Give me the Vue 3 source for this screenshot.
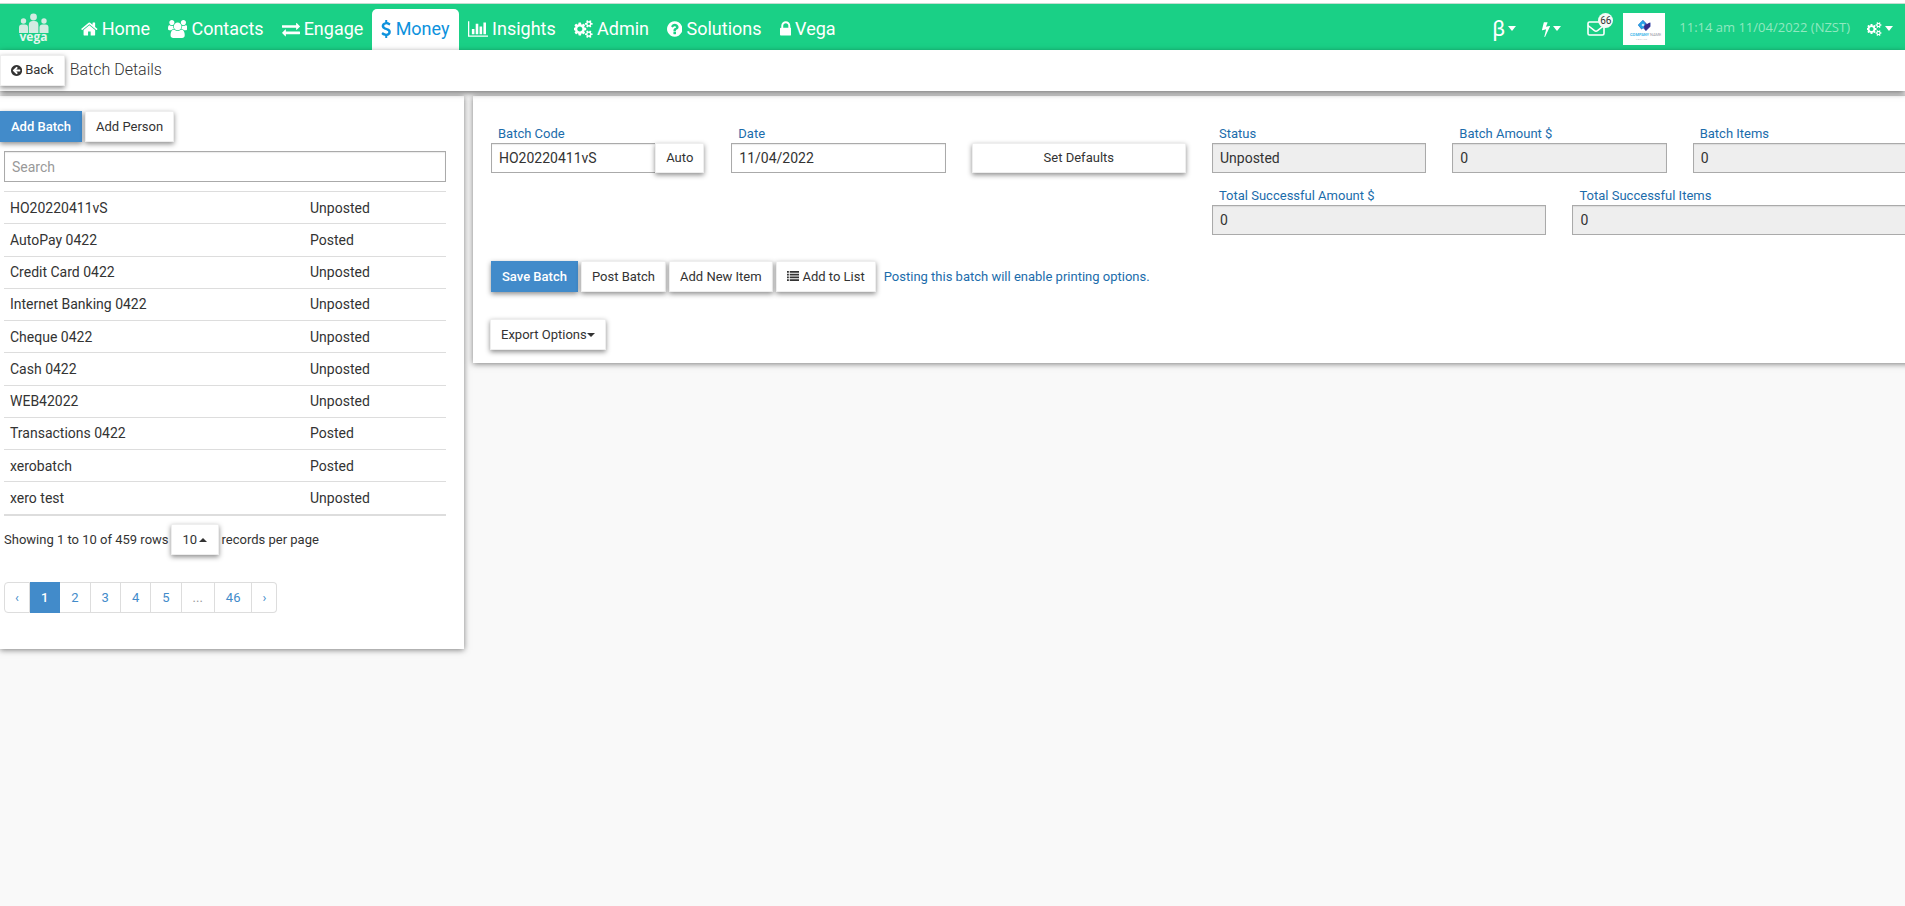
<template>
  <div class="page">
    <header class="topbar">
      <a href="#" class="brand" aria-label="Vega">
        <svg viewBox="0 0 30 32" class="brand-logo">
          <g fill="#d3ebe2">
            <circle cx="4.500" cy="8" r="2.700" />
            <circle cx="14.500" cy="4" r="3.400" />
            <circle cx="25" cy="8" r="2.700" />
            <path d="M0 20v-5.500q0-3 3-3h3q3 0 3 3v5.500z" />
            <path d="M9.800 20v-8q0-4 4-4h1.600q4 0 4 4v8z" />
            <path d="M20.500 20v-5.500q0-3 3-3h3q3 0 3 3v5.500z" />
          </g>
          <text x="14.500" y="28" text-anchor="middle">vega</text>
        </svg>
      </a>

      <nav class="nav">
        <a
          v-for="item in navItems"
          :key="item.label"
          href="#"
          class="nav-link"
          :class="{ active: item.label === activeNav }"
          @click.prevent="activeNav = item.label"
        >
          <svg class="fa" :class="'fa-' + item.icon" :viewBox="icons[item.icon].box"><path :d="icons[item.icon].d" /></svg>
          <span>{{ item.label }}</span>
        </a>
      </nav>

      <div class="tools">
        <button type="button" class="tool" aria-label="Beta features"><span class="beta">β</span><i class="caret"></i></button>
        <button type="button" class="tool" aria-label="Quick actions">
          <svg class="fa fa-bolt" :viewBox="icons.bolt.box"><path :d="icons.bolt.d" /></svg><i class="caret"></i>
        </button>
        <button type="button" class="tool mail" aria-label="Messages">
          <svg viewBox="0 0 18 15" class="mail-icon">
            <rect x="1" y="1" width="16" height="13" rx="1.500" fill="none" stroke="#fff" stroke-width="1.600" />
            <path d="M1 4.500l6.500 5.200q1.500 1 3 0l6.500-5.200" fill="none" stroke="#fff" stroke-width="1.600" />
          </svg>
          <span class="badge">66</span>
        </button>
        <a href="#" class="company" aria-label="Company">
          <svg viewBox="0 0 42 32">
            <path d="M15 12l5-5 4 4 3.500-1.500v4l-4.500 4.500-3-3-1.500 1.500z" fill="#3f4fae" />
            <path d="M15 12l4.500-4.800 3 2.800-2 5-2 1z" fill="#29a3e6" />
            <path d="M21 13l6-3.500v4l-4.500 4z" fill="#3a2a86" />
            <circle cx="20" cy="12" r="1.300" fill="#c8e6fa" />
            <text x="7" y="23" font-size="4" font-weight="700" fill="#45b8ea">COMPANY</text>
            <text x="27" y="23" font-size="4" fill="#9a9aa5">NAME</text>
            <text x="13" y="27" font-size="2" fill="#b5b5bd">T A G L I N E</text>
          </svg>
        </a>
        <span class="clock">11:14 am 11/04/2022 (NZST)</span>
        <button type="button" class="tool" aria-label="Settings">
          <svg class="fa fa-small" :viewBox="icons.cogs.box"><path :d="icons.cogs.d" /></svg><i class="caret"></i>
        </button>
      </div>
    </header>

    <div class="titlebar">
      <button type="button" class="btn">
        <svg class="fa" :viewBox="icons.back.box"><path :d="icons.back.d" /></svg>
        Back
      </button>
      <h1>Batch Details</h1>
    </div>

    <main class="columns">
      <section class="panel list-panel">
        <div class="btn-row">
          <button type="button" class="btn btn-primary">Add Batch</button>
          <button type="button" class="btn">Add Person</button>
        </div>

        <div class="list-body">
          <input v-model="search" type="text" class="field" placeholder="Search" aria-label="Search" />

          <table class="batches">
            <tbody>
              <tr v-for="batch in visibleBatches" :key="batch.code">
                <td class="code">{{ batch.code }}</td>
                <td>{{ batch.status }}</td>
              </tr>
            </tbody>
          </table>

          <div class="page-info">
            <span>Showing 1 to 10 of 459 rows</span>
            <label class="page-size">
              <span class="select-wrap">
                <select v-model="pageSize" class="btn">
                  <option>10</option>
                  <option>25</option>
                  <option>50</option>
                  <option>100</option>
                </select>
                <i class="caret up"></i>
              </span>
              records per page
            </label>
          </div>

          <ul class="pagination">
            <li v-for="p in pages" :key="p">
              <span v-if="p === '...'" class="gap">...</span>
              <a v-else href="#" :class="{ active: p === currentPage }" @click.prevent="goTo(p)">{{ p }}</a>
            </li>
          </ul>
        </div>
      </section>

      <section class="panel detail-panel">
        <form class="detail-grid" @submit.prevent>
          <div class="cell">
            <label for="code">Batch Code</label>
            <div class="input-group">
              <input id="code" v-model="form.code" type="text" class="field" />
              <button type="button" class="btn">Auto</button>
            </div>
          </div>
          <div class="cell">
            <label for="date">Date</label>
            <input id="date" v-model="form.date" type="text" class="field" />
          </div>
          <div class="cell cell-end">
            <button type="button" class="btn btn-block">Set Defaults</button>
          </div>
          <div class="cell">
            <label for="status">Status</label>
            <input id="status" type="text" class="field" value="Unposted" readonly />
          </div>
          <div class="cell">
            <label for="amount">Batch Amount $</label>
            <input id="amount" type="text" class="field" value="0" readonly />
          </div>
          <div class="cell">
            <label for="items">Batch Items</label>
            <input id="items" type="text" class="field" value="0" readonly />
          </div>
          <div class="totals">
            <div class="cell">
              <label for="total-amount">Total Successful Amount $</label>
              <input id="total-amount" type="text" class="field" value="0" readonly />
            </div>
            <div class="cell">
              <label for="total-items">Total Successful Items</label>
              <input id="total-items" type="text" class="field" value="0" readonly />
            </div>
          </div>
        </form>

        <div class="btn-row actions">
          <button type="button" class="btn btn-primary">Save Batch</button>
          <button type="button" class="btn">Post Batch</button>
          <button type="button" class="btn">Add New Item</button>
          <button type="button" class="btn">
            <svg class="fa fa-list" viewBox="0 0 14 12"><path d="M0 0h2v2H0zM3 0h11v2H3zM0 3h2v2H0zM3 3h11v2H3zM0 6h2v2H0zM3 6h11v2H3zM0 9h2v2H0zM3 9h11v2H3z" /></svg>
            Add to List
          </button>
          <span class="hint">Posting this batch will enable printing options.</span>
        </div>

        <div class="btn-row export">
          <button type="button" class="btn">Export Options<i class="caret"></i></button>
        </div>
      </section>
    </main>
  </div>
</template>

<script setup>
import { computed, reactive, ref } from 'vue';

const icons = {
  home: {
    box: '64 0 1664 1792',
    d: 'M1472 992v480q0 26-19 45t-45 19h-384v-384h-256v384h-384q-26 0-45-19t-19-45v-480q0-1 .5-3t.5-3l575-474 575 474q1 2 1 6zm223-69l-62 74q-8 9-21 11h-3q-13 0-21-7l-692-577-692 577q-12 8-24 7-13-2-21-11l-62-74q-8-10-7-23.500t11-21.500l719-599q32-26 76-26t76 26l244 204v-195q0-14 9-23t23-9h192q14 0 23 9t9 23v408l219 182q10 8 11 21.500t-7 23.500z'
  },
  users: {
    box: '0 0 1920 1792',
    d: 'M593 896q-162 5-265 128h-134q-82 0-138-40.5t-56-118.5q0-353 124-353 6 0 43.5 21t97.5 42.5 119 21.5q67 0 133-23-5 37-5 66 0 139 81 256zm1071 637q0 120-73 189.5t-194 69.5h-874q-121 0-194-69.5t-73-189.5q0-53 3.5-103.5t14-109 26.5-108.5 43-97.5 62-81 85.5-53.5 111.5-20q10 0 43 21.5t73 48 107 48 135 21.5 135-21.5 107-48 73-48 43-21.5q61 0 111.5 20t85.5 53.5 62 81 43 97.5 26.5 108.5 14 109 3.5 103.5zm-1024-1277q0 106-75 181t-181 75-181-75-75-181 75-181 181-75 181 75 75 181zm704 384q0 159-112.5 271.5t-271.5 112.5-271.5-112.5-112.5-271.5 112.5-271.5 271.5-112.5 271.5 112.5 112.5 271.5zm576 225q0 78-56 118.5t-138 40.5h-134q-103-123-265-128 81-117 81-256 0-29-5-66 66 23 133 23 59 0 119-21.5t97.5-42.5 43.5-21q124 0 124 353zm-128-609q0 106-75 181t-181 75-181-75-75-181 75-181 181-75 181 75 75 181z'
  },
  exchange: {
    box: '0 0 1792 1792',
    d: 'M1792 1184v192q0 13-9.5 22.5t-22.5 9.5h-1376v192q0 13-9.5 22.5t-22.5 9.5q-12 0-24-10l-319-320q-9-9-9-22 0-14 9-23l320-320q9-9 23-9 13 0 22.5 9.5t9.5 22.5v192h1376q13 0 22.5 9.5t9.5 22.5zm0-544q0 14-9 23l-320 320q-9 9-23 9-13 0-22.5-9.5t-9.5-22.5v-192h-1376q-13 0-22.5-9.5t-9.5-22.5v-192q0-13 9.5-22.5t22.5-9.5h1376v-192q0-14 9-23t23-9q12 0 24 10l319 319q9 9 9 23z'
  },
  usd: {
    box: '384 0 1024 1792',
    d: 'M1362 1185q0 153-99.5 263.5t-258.5 136.5v175q0 14-9 23t-23 9h-135q-13 0-22.5-9.5t-9.5-22.5v-175q-66-9-127.5-31t-101.5-44.5-74-48-46.5-37.5-17.5-18q-17-21-2-41l103-135q7-10 23-12 15-2 24 9l2 2q113 99 243 125 37 8 74 8 81 0 142.5-43t61.5-122q0-28-15-53t-33.5-42-58.5-37.5-66-32-80-32.5q-39-16-61.5-25t-61.5-26.5-62.5-31-56.5-35.5-53.5-42.5-43.5-49-35.5-58-21-66.5-8.5-78q0-138 98-242t255-134v-180q0-13 9.5-22.5t22.5-9.5h135q14 0 23 9t9 23v176q57 6 110.5 23t87 33.5 63.5 37.5 39 29 15 14q17 18 5 38l-81 146q-8 15-23 16-14 3-27-7-3-3-14.5-12t-39-26.5-58.5-32-74.5-26-85.5-11.5q-95 0-155 43t-60 111q0 26 8.5 48t29.5 41.5 39.5 33 56 31 60.5 27 70 27.5q53 20 81 31.5t76 35 75.5 42.5 62 50 53 63.5 31.5 76.5 13 94z'
  },
  chart: {
    box: '0 0 2048 1792',
    d: 'M640 896v512h-256v-512h256zm384-512v1024h-256v-1024h256zm1024 1152v128h-2048v-1536h128v1408h1920zm-640-896v768h-256v-768h256zm384-384v1152h-256v-1152h256z'
  },
  cogs: {
    box: '0 0 1920 1792',
    d: 'M832 896q0-106-75-181t-181-75-181 75-75 181 75 181 181 75 181-75 75-181zm768 512q0-52-38-90t-90-38-90 38-38 90q0 53 37.5 90.5t90.5 37.5 90.5-37.5 37.5-90.5zm0-1024q0-52-38-90t-90-38-90 38-38 90q0 53 37.5 90.5t90.5 37.5 90.5-37.5 37.5-90.5zm-384 421v185q0 10-7 19.5t-16 10.5l-155 24q-11 35-32 76 34 48 90 115 7 11 7 20 0 12-7 19-23 30-82.5 89.5t-78.5 59.5q-11 0-21-7l-115-90q-37 19-77 31-11 108-23 155-7 24-30 24h-186q-11 0-20-7.5t-10-17.5l-23-153q-34-10-75-31l-118 89q-7 7-20 7-11 0-21-8-144-133-144-160 0-9 7-19 10-14 41-53t47-61q-23-44-35-82l-152-24q-10-1-17-9.5t-7-19.5v-185q0-10 7-19.5t16-10.5l155-24q11-35 32-76-34-48-90-115-7-11-7-20 0-12 7-20 22-30 82-89t79-59q11 0 21 7l115 90q34-18 77-32 11-108 23-154 7-24 30-24h186q11 0 20 7.5t10 17.5l23 153q34 10 75 31l118-89q8-7 20-7 11 0 21 8 144 133 144 160 0 8-7 19-12 16-42 54t-45 60q23 48 34 82l152 23q10 2 17 10.5t7 19.5zm640 533v140q0 16-149 31-12 27-30 52 51 113 51 138 0 4-4 7-122 71-124 71-8 0-46-47t-52-68q-20 2-30 2t-30-2q-14 21-52 68t-46 47q-2 0-124-71-4-3-4-7 0-25 51-138-18-25-30-52-149-15-149-31v-140q0-16 149-31 13-29 30-52-51-113-51-138 0-4 4-7 4-2 35-20t59-34 30-16q8 0 46 46.5t52 67.5q20-2 30-2t30 2q51-71 92-112l6-2q4 0 124 70 4 3 4 7 0 25-51 138 17 23 30 52 149 15 149 31zm0-1024v140q0 16-149 31-12 27-30 52 51 113 51 138 0 4-4 7-122 71-124 71-8 0-46-47t-52-68q-20 2-30 2t-30-2q-14 21-52 68t-46 47q-2 0-124-71-4-3-4-7 0-25 51-138-18-25-30-52-149-15-149-31v-140q0-16 149-31 13-29 30-52-51-113-51-138 0-4 4-7 4-2 35-20t59-34 30-16q8 0 46 46.5t52 67.5q20-2 30-2t30 2q51-71 92-112l6-2q4 0 124 70 4 3 4 7 0 25-51 138 17 23 30 52 149 15 149 31z'
  },
  question: {
    box: '128 0 1536 1792',
    d: 'M1024 1376v-192q0-14-9-23t-23-9h-192q-14 0-23 9t-9 23v192q0 14 9 23t23 9h192q14 0 23-9t9-23zm256-672q0-88-55.5-163t-138.5-116-170-41q-243 0-371 213-15 24 8 42l132 100q7 6 19 6 16 0 25-12 53-68 86-92 34-24 86-24 48 0 85.5 26t37.5 59q0 38-20 61t-68 45q-63 28-115.5 86.5t-52.5 125.5v36q0 14 9 23t23 9h192q14 0 23-9t9-23q0-19 21.5-49.5t54.5-49.5q32-18 49-28.5t46-35 44.5-48 28-60.5 12.5-81zm384 192q0 209-103 385.5t-279.5 279.5-385.5 103-385.5-103-279.5-279.5-103-385.5 103-385.5 279.5-279.5 385.5-103 385.5 103 279.5 279.5 103 385.5z'
  },
  lock: {
    box: '320 0 1152 1792',
    d: 'M640 768h512v-192q0-106-75-181t-181-75-181 75-75 181v192zm832 96v576q0 40-28 68t-68 28h-960q-40 0-68-28t-28-68v-576q0-40 28-68t68-28h32v-192q0-184 132-316t316-132 316 132 132 316v192h32q40 0 68 28t28 68z'
  },
  bolt: {
    box: '448 0 896 1792',
    d: 'M1333 566q18 20 7 44l-540 1157q-13 25-42 25-4 0-14-2-17-5-25.5-19t-4.5-30l197-808-406 101q-4 1-12 1-18 0-31-11-18-15-13-39l201-825q4-14 16-23t28-9h328q19 0 32 12.5t13 29.5q0 8-5 18l-171 463 396-98q8-2 12-2 19 0 34 15z'
  },
  back: {
    box: '128 0 1536 1792',
    d: 'M1408 960v-128q0-26-19-45t-45-19h-502l189-189q19-19 19-45t-19-45l-91-91q-18-18-45-18t-45 18l-362 362-91 91q-18 18-18 45t18 45l91 91 362 362q18 18 45 18t45-18l91-91q18-18 18-45t-18-45l-189-189h502q26 0 45-19t19-45zm256-64q0 209-103 385.5t-279.5 279.5-385.5 103-385.5-103-279.5-279.5-103-385.5 103-385.5 279.5-279.5 385.5-103 385.5 103 279.5 279.5 103 385.5z'
  }
};

const navItems = [
  { label: 'Home', icon: 'home' },
  { label: 'Contacts', icon: 'users' },
  { label: 'Engage', icon: 'exchange' },
  { label: 'Money', icon: 'usd' },
  { label: 'Insights', icon: 'chart' },
  { label: 'Admin', icon: 'cogs' },
  { label: 'Solutions', icon: 'question' },
  { label: 'Vega', icon: 'lock' }
];
const activeNav = ref('Money');

const batches = [
  { code: 'HO20220411vS', status: 'Unposted' },
  { code: 'AutoPay 0422', status: 'Posted' },
  { code: 'Credit Card 0422', status: 'Unposted' },
  { code: 'Internet Banking 0422', status: 'Unposted' },
  { code: 'Cheque 0422', status: 'Unposted' },
  { code: 'Cash 0422', status: 'Unposted' },
  { code: 'WEB42022', status: 'Unposted' },
  { code: 'Transactions 0422', status: 'Posted' },
  { code: 'xerobatch', status: 'Posted' },
  { code: 'xero test', status: 'Unposted' }
];

const search = ref('');
const visibleBatches = computed(() => {
  const term = search.value.trim().toLowerCase();
  return batches.filter(b => b.code.toLowerCase().includes(term));
});

const pageSize = ref('10');
const currentPage = ref('1');
const pages = ['‹', '1', '2', '3', '4', '5', '...', '46', '›'];

const goTo = (p) => {
  const current = parseInt(currentPage.value, 10);
  if (p === '‹') currentPage.value = String(Math.max(1, current - 1));
  else if (p === '›') currentPage.value = String(Math.min(46, current + 1));
  else currentPage.value = p;
};

const form = reactive({ code: 'HO20220411vS', date: '11/04/2022' });
</script>

<style>
body { margin: 0; background: #f9f9f9; }
</style>

<style scoped>
.page { font-family: Roboto, "Liberation Sans", sans-serif; font-size: 13px; color: #333; overflow-x: hidden; padding-bottom: 16px; }
.page *, .page *::before { box-sizing: border-box; }
button, input, select { font-family: inherit; color: inherit; margin: 0; }
a { text-decoration: none; }

.fa { height: 1em; width: auto; fill: currentColor; flex-shrink: 0; }
.caret { display: inline-block; border: 4px solid transparent; border-top-color: currentColor; border-bottom: 0; }
.caret.up { border-top: 0; border-bottom: 4px solid currentColor; }

/* top bar */
.topbar { display: flex; align-items: stretch; height: 50px; border-top: 3px solid #fff; background: #1ad086; color: #fff; box-shadow: inset 0 1px 0 #c4ddd2; }
.brand { width: 72px; padding: 10px 0 0 19px; }
.brand-logo { display: block; width: 30px; height: 32px; }
.brand-logo text { font: 700 12px "Open Sans", sans-serif; fill: #e4f6ee; }
.nav { display: flex; padding-top: 6px; }
.nav-link { display: flex; align-items: center; gap: 4px; padding: 0 9px 1px; border-radius: 5px 5px 0 0; color: #fff; font-size: 18px; line-height: 24px; }
.nav-link.active { background: #fff; color: #0d92dd; }

.tools { display: flex; align-items: center; margin-left: auto; padding: 4px 12px 0 0; }
.tool { display: flex; align-items: center; gap: 3px; padding: 0; border: 0; background: none; color: #fff; font-size: 16px; cursor: pointer; }
.tool .caret { border-top-width: 5px; }
.beta { font-size: 22px; line-height: 24px; }
.tools > * + * { margin-left: 26px; }
.fa-small { font-size: 14px; }
.mail { position: relative; }
.mail-icon { width: 18px; height: 15px; }
.badge { position: absolute; left: 11px; top: -8px; width: 15px; height: 15px; border-radius: 50%; background: #f3fbf7; color: #333; font-size: 10px; line-height: 15px; text-align: center; }
.tools .company { width: 42px; height: 32px; margin-left: 18px; background: #fff; }
.company svg { display: block; width: 100%; height: 100%; }
.tools .clock { margin-left: 14px; padding-bottom: 4px; font-family: "Open Sans", sans-serif; font-size: 13px; color: #90e8c0; }
.tools .clock + .tool { margin-left: 17px; }

/* title bar */
.titlebar { position: relative; z-index: 1; display: flex; align-items: center; gap: 5px; height: 41px; padding-bottom: 1px; background: #fff; box-shadow: 0 2px 6px rgba(0, 0, 0, 0.55); }
.titlebar h1 { margin: 0; font-size: 16px; font-weight: 300; line-height: 20px; }

.btn { display: inline-flex; align-items: center; justify-content: center; gap: 3px; height: 31px; padding: 0 10px; border: 1px solid #eee; border-radius: 0; background: #fff; box-shadow: 0 2px 5px rgba(0, 0, 0, 0.45); font-size: 13px; line-height: 18px; white-space: nowrap; cursor: pointer; }
.btn-primary { border-color: #428bca; background: #428bca; color: #fff; font-weight: 500; }
.btn-block { width: 100%; }
.btn-row { display: flex; align-items: center; gap: 3px; }

.field { display: block; width: 100%; height: 31px; padding: 0 7px; border: 1px solid #aaa; border-radius: 0; background: #fff; box-shadow: inset 0 1px 1px rgba(0, 0, 0, 0.08); font-size: 14px; outline: none; }
.field::placeholder { color: #999; }
.field[readonly] { background: #eee; }

/* panels */
.columns { display: grid; grid-template-columns: calc(25% - 16px) 1fr; align-items: start; gap: 9px; margin: 5px -15px 0 0; }
.panel { background: #fff; box-shadow: 0 1px 6px rgba(0, 0, 0, 0.5); }
.list-panel { padding: 15px 0 36px; }
.list-body { padding: 9px 18px 0 4px; }

.batches { width: 100%; height: 325px; margin-top: 9px; border-collapse: collapse; border-bottom: 2px solid #ddd; font-size: 14px; line-height: 20px; }
.batches td { padding: 0 6px; border-top: 1px solid #ddd; }
.batches .code { width: 300px; }

.page-info { display: flex; align-items: center; gap: 2px; margin-top: 8px; }
.page-size { display: flex; align-items: center; gap: 3px; }
.select-wrap { position: relative; }
.select-wrap select { width: 48px; padding-left: 11px; appearance: none; }
.select-wrap .caret { position: absolute; right: 12px; top: 14px; pointer-events: none; }

.pagination { display: flex; margin: 27px 0 0; padding: 0; list-style: none; }
.pagination li > * { display: block; height: 31px; padding: 0 11px; border: 1px solid #ddd; border-left-width: 0; line-height: 29px; color: #428bca; }
.pagination li:first-child > * { padding: 0 10px; border-left-width: 1px; border-radius: 4px 0 0 4px; }
.pagination li:last-child > * { padding: 0 10px; border-radius: 0 4px 4px 0; }
.pagination li > .gap { color: #999; }
.pagination li > .active { border-color: #428bca; background: #428bca; color: #fff; font-weight: 500; }

.detail-panel { padding: 29px 0 13px 5px; }
.detail-grid { display: grid; grid-template-columns: repeat(6, 1fr); row-gap: 14px; }
.detail-grid .field, .detail-grid .btn { height: 30px; }
.cell { padding: 0 13px; min-width: 0; }
.cell label { display: block; padding-left: 7px; line-height: 18px; color: #1b6cab; }
.cell-end { display: flex; align-items: flex-end; }
.totals { grid-column: 4 / span 3; display: grid; grid-template-columns: 1fr 1fr; }
.input-group { display: flex; padding-right: 1px; }
.input-group .field { flex: 1; min-width: 0; border-right-width: 0; }
.actions { margin-top: 26px; padding-left: 13px; }
.hint { margin-left: 5px; color: #1b6cab; }
.fa-list { height: 11px; }
.export { margin-top: 27px; padding-left: 12px; }
.export .btn { gap: 0; }
</style>
